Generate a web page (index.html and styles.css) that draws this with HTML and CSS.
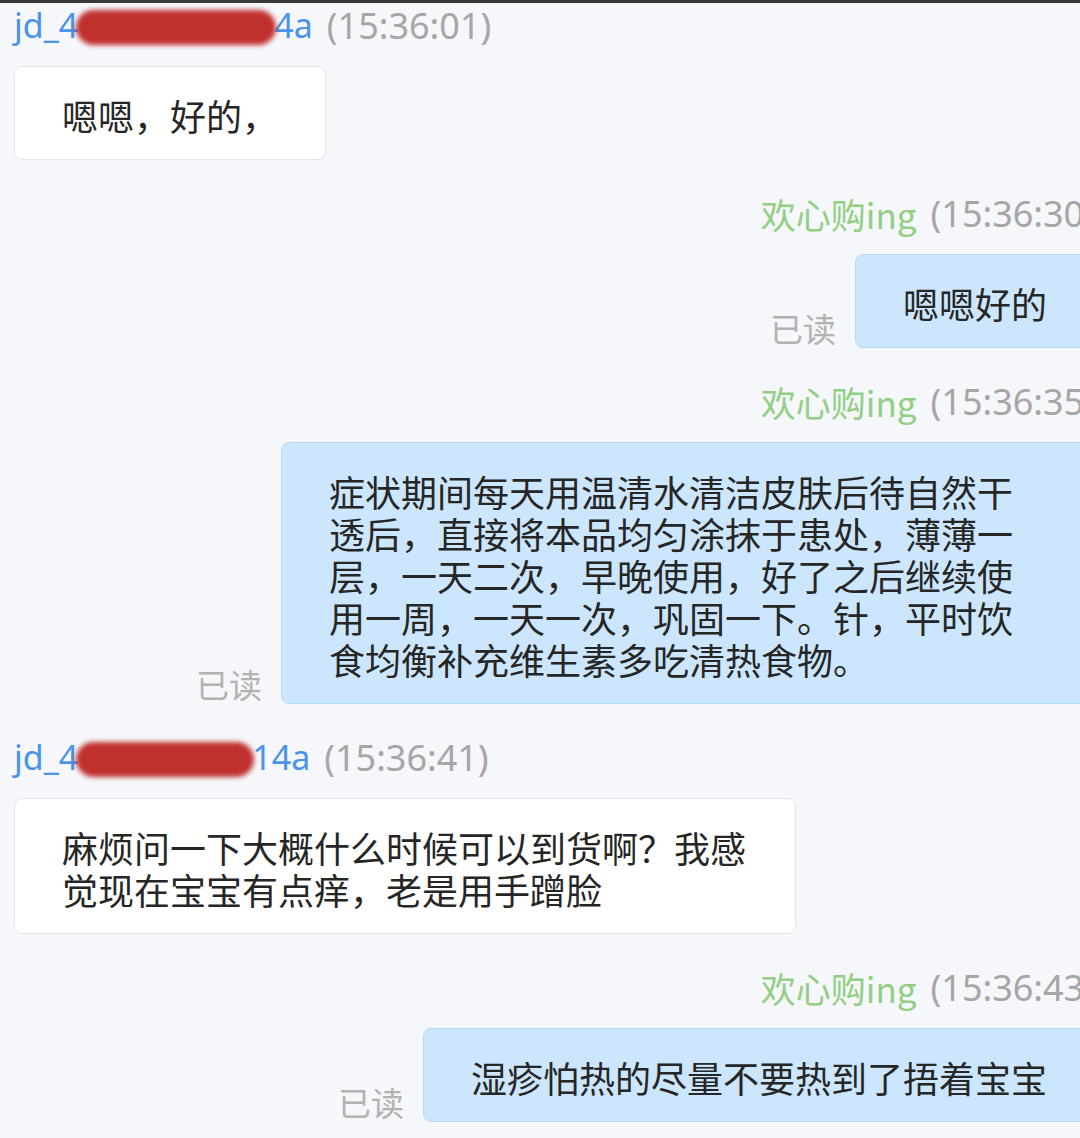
FILE: index.html
```html
<!DOCTYPE html>
<html lang="zh-CN">
<head>
<meta charset="utf-8">
<title>聊天记录</title>
<link rel="stylesheet" href="styles.css">
</head>
<body>
<div class="chat">
  <div class="msg left">
    <div class="meta"><span class="name buyer">jd_4<span class="redact r1"></span>4a</span><span class="time">(15:36:01)</span></div>
    <div class="row">
      <div class="bubble white">嗯嗯，好的，</div>
    </div>
  </div>

  <div class="msg right">
    <div class="meta"><span class="name seller">欢心购ing</span><span class="time">(15:36:30)</span></div>
    <div class="row">
      <span class="read">已读</span>
      <div class="bubble blue">嗯嗯好的</div>
    </div>
  </div>

  <div class="msg right">
    <div class="meta"><span class="name seller">欢心购ing</span><span class="time">(15:36:35)</span></div>
    <div class="row">
      <span class="read">已读</span>
      <div class="bubble blue">症状期间每天用温清水清洁皮肤后待自然干透后，直接将本品均匀涂抹于患处，薄薄一层，一天二次，早晚使用，好了之后继续使用一周，一天一次，巩固一下。针，平时饮食均衡补充维生素多吃清热食物。</div>
    </div>
  </div>

  <div class="msg left">
    <div class="meta"><span class="name buyer">jd_4<span class="redact r2"></span>14a</span><span class="time">(15:36:41)</span></div>
    <div class="row">
      <div class="bubble white">麻烦问一下大概什么时候可以到货啊？我感觉现在宝宝有点痒，老是用手蹭脸</div>
    </div>
  </div>

  <div class="msg right">
    <div class="meta"><span class="name seller">欢心购ing</span><span class="time">(15:36:43)</span></div>
    <div class="row">
      <span class="read">已读</span>
      <div class="bubble blue">湿疹怕热的尽量不要热到了捂着宝宝</div>
    </div>
  </div>
</div>
</body>
</html>
```

FILE: styles.css
```css
html, body {
  margin: 0;
  padding: 0;
  background: #f5f7fa;
  overflow: hidden;
}

body {
  width: 1080px;
  height: 1138px;
  border-top: 3px solid #3a3a3a;
  box-sizing: border-box;
  font-family: "Noto Sans", "Noto Sans CJK SC", sans-serif;
}

.chat {
  width: 1095px;
  box-sizing: border-box;
  padding: 3px 0 0 14px;
  display: flex;
  flex-direction: column;
  gap: 34px;
}

.msg {
  display: flex;
  flex-direction: column;
  gap: 20px;
}

.msg.right {
  align-items: flex-end;
}

.msg.left {
  align-items: flex-start;
}

.meta {
  height: 40px;
  line-height: 40px;
  white-space: nowrap;
  display: flex;
  align-items: center;
  gap: 14px;
}

.name {
  font-size: 34px;
  position: relative;
}

.name.buyer {
  color: #4a93ec;
  font-family: "Noto Sans", "Noto Sans CJK SC", sans-serif;
}

.name.seller {
  color: #92cf83;
  font-size: 35px;
  font-family: "Noto Sans CJK SC", "Noto Sans", sans-serif;
}

.time {
  font-size: 36px;
  color: #a6a6a6;
  font-family: "Noto Sans", sans-serif;
}

.redact {
  display: inline-block;
  vertical-align: middle;
  height: 35px;
  background: #c0302f;
  border-radius: 18px;
  filter: blur(2.5px);
  margin: 0 -2px 0 -2px;
  position: relative;
  top: -2px;
}

.redact.r1 { width: 200px; }
.redact.r2 { width: 178px; }

.row {
  display: flex;
  align-items: flex-end;
  gap: 19px;
}

.read {
  font-size: 33px;
  line-height: 40px;
  color: #b2b2b2;
  font-family: "Noto Sans CJK SC", sans-serif;
  white-space: nowrap;
}

.bubble {
  font-family: "Noto Sans CJK SC", sans-serif;
  font-size: 36px;
  line-height: 42px;
  color: #262626;
  padding: 27px 47px 23px 47px;
  border-radius: 8px;
  box-sizing: border-box;
}

.bubble.white {
  background: #ffffff;
  border: 1px solid #e4e6ea;
  max-width: 782px;
}

.bubble.blue {
  background: #cce6fe;
  border: 1px solid #b6d9fb;
  max-width: 814px;
}
```
